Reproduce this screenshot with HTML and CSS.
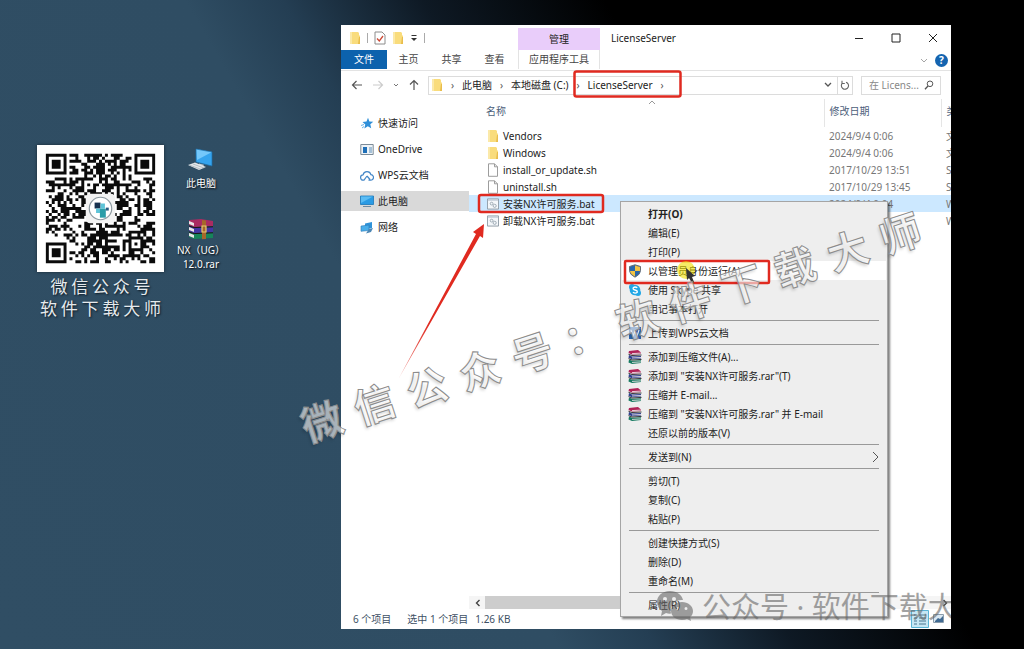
FILE: index.html
```html
<!DOCTYPE html>
<html lang="zh-CN">
<head>
    <meta charset="UTF-8">
    <title>LicenseServer</title>
    <link rel="stylesheet" href="styles.css">
</head>
<body>
    <svg class="sprite" aria-hidden="true">
        <symbol id="folder" viewBox="0 0 12 14">
            <path d="M1 1h8l1 1v2l1 1v8H1z" fill="#f9dc7c"/>
            <path d="M1 1h2v12H1z" fill="#fbe9a9"/>
            <path d="M10 6h1v7H9z" fill="#e9bd4c"/>
        </symbol>
        <symbol id="file" viewBox="0 0 12 14">
            <path d="M1.5.8h6l3 3v9.5h-9z" fill="#fff" stroke="#929292" stroke-width=".9"/>
            <path d="M7.5.8v3h3" fill="none" stroke="#929292" stroke-width=".9"/>
        </symbol>
        <symbol id="bat" viewBox="0 0 13 12">
            <path d="M.5.5h12v11H.5z" fill="#f4f7fa" stroke="#8c98a3"/>
            <path d="M1 1h11v1.5H1z" fill="#c3ced8"/>
            <circle cx="5" cy="5.600" r="1.500" fill="none" stroke="#9aa7b1"/>
            <circle cx="8.300" cy="8" r="1.700" fill="none" stroke="#9aa7b1"/>
        </symbol>
        <symbol id="rar" viewBox="0 0 14 14">
            <path d="M1 1l9-1 3 2.500V4L4 4.500.5 3z" fill="#b02257"/>
            <path d="M1 5l3 1.500 9-.5v2.500l-9 .7-3.500-1.500z" fill="#2f3f8e"/>
            <path d="M1 9.500l3 1.300 9-.5V13l-9 1-3.500-1.500z" fill="#157a60"/>
            <path d="M4 3.600l9-.5M4 8l9-.5M4 12.400l9-.5" stroke="#ece3e6" stroke-width=".9"/>
            <path d="M.5 4.300L4 5.500l9.500-.5M.5 8.600L4 10l9.500-.6" stroke="#222" stroke-width=".9" fill="none"/>
        </symbol>
        <symbol id="monitor" viewBox="0 0 14 13">
            <path d="M.5 1h13v8.500H.5z" fill="#2b9be4" stroke="#1b77b9" stroke-width=".8"/>
            <path d="M1 1.500h12L1 8z" fill="#5abcf4"/>
            <path d="M3 11.500h8" stroke="#6d8ba3"/>
        </symbol>
    </svg>

    <main class="desktop">
        <section class="promo">
            <svg class="qr" viewBox="0 0 43 43" role="img" aria-label="二维码">
                <rect width="43" height="43" fill="#fff"/>
                <path id="qr-modules" fill="#0b0b0b"/>
                <rect x="16.500" y="16.500" width="10" height="10" rx="1.500" fill="#f3f3f3"/>
                <circle cx="21.500" cy="21.500" r="3.800" fill="#fff" stroke="#8c99a0" stroke-width=".4"/>
                <path d="M19.500 19.500h2v2h-2z" fill="#17324f"/>
                <path d="M21.500 19.800h1.500v1.800h-1.500zM20 21.500h1.500v1.500H20z" fill="#5ec4d8"/>
                <path d="M21.300 21.600h2v3h-2z" fill="#2b9da8"/>
                <path d="M23.300 21.200h1v1h-1z" fill="#2c5d83"/>
            </svg>
            <p class="promo-text">微 信 公 众 号</p>
            <p class="promo-text">软 件 下 载 大 师</p>
        </section>

        <section class="shortcuts">
            <a class="shortcut" href="#">
                <svg width="28" height="26" viewBox="0 0 28 26">
                    <path d="M9 2l16 3v14L9 15z" fill="#35a4ee"/>
                    <path d="M9 2l16 3L10 13z" fill="#74c8fb"/>
                    <path d="M9 2l16 3v14L9 15z" fill="none" stroke="#1d6ea8" stroke-width=".7"/>
                    <path d="M12 16.500l5 1.300-1 2.200h-5z" fill="#b8c5cf"/>
                    <path d="M1 18l7-2.500 11 4.500-7 3z" fill="#e3e7ea"/>
                    <path d="M3 18.300l11 4M6 17l11 4" stroke="#93a0aa" stroke-width=".6"/>
                </svg>
                <span>此电脑</span>
            </a>
            <a class="shortcut" href="#">
                <svg width="28" height="22" viewBox="0 0 28 22">
                    <path d="M2 2l12-1 12 2v5l-19 1-5-2z" fill="#a92c62"/>
                    <path d="M2 8l5 2 19-1v5L7 15l-5-2z" fill="#4336a4"/>
                    <path d="M2 14l5 2 19-1v5L7 21l-5-2z" fill="#16855a"/>
                    <path d="M2 3l5 2v3L2 6zM2 9l5 2v3l-5-2zM2 15l5 2v3l-5-2z" fill="#e9e6e6"/>
                    <path d="M2 8l5 1.600L26 8.800M2 14l5 1.600 19-.8" fill="none" stroke="#191919"/>
                    <path d="M15 2l4 .5V21l-4 .3z" fill="#a5672b"/>
                    <path d="M15 8h4v6h-4z" fill="none" stroke="#eacb72" stroke-width="1.200"/>
                </svg>
                <span>NX（UG）<br>12.0.rar</span>
            </a>
        </section>

        <section class="window">
            <header class="titlebar">
                <div class="quick-access">
                    <svg width="12" height="14"><use href="#folder"/></svg>
                    <i class="divider"></i>
                    <svg width="12" height="14" viewBox="0 0 12 14">
                        <path d="M1 1h7l3 3v9H1z" fill="#fff" stroke="#8c8c8c"/>
                        <path d="M3 7.500l2.300 2.500L9 5" fill="none" stroke="#cc4a36" stroke-width="1.300"/>
                    </svg>
                    <svg width="12" height="14"><use href="#folder"/></svg>
                    <svg width="8" height="8" viewBox="0 0 8 8"><path d="M1.500 1.500h5" stroke="#333"/><path d="M1 4h6L4 7z" fill="#333"/></svg>
                    <i class="divider"></i>
                </div>
                <div class="tool-group">管理</div>
                <h1 class="window-title">LicenseServer</h1>
                <div class="window-buttons">
                    <button type="button" aria-label="最小化"><svg width="10" height="10" viewBox="0 0 10 10"><path d="M1 5.500h8"/></svg></button>
                    <button type="button" aria-label="最大化"><svg width="10" height="10" viewBox="0 0 10 10"><path d="M1 1h8v8H1z"/></svg></button>
                    <button type="button" aria-label="关闭"><svg width="10" height="10" viewBox="0 0 10 10"><path d="M1 1l8 8M9 1L1 9"/></svg></button>
                </div>
            </header>

            <nav class="ribbon">
                <a class="tab tab-file" href="#">文件</a>
                <a class="tab" href="#">主页</a>
                <a class="tab" href="#">共享</a>
                <a class="tab" href="#">查看</a>
                <a class="tab tab-tools" href="#">应用程序工具</a>
                <svg class="ribbon-toggle" width="8" height="6" viewBox="0 0 8 6"><path d="M1 1l3 3 3-3" fill="none" stroke="#a5a5a5"/></svg>
                <button class="help" type="button">?</button>
            </nav>

            <div class="location">
                <div class="history">
                    <svg width="12" height="12" viewBox="0 0 12 12"><path d="M11 6H2M5.500 2L1.500 6l4 4" fill="none" stroke="#555" stroke-width="1.200"/></svg>
                    <svg width="12" height="12" viewBox="0 0 12 12"><path d="M1 6h9M6.500 2l4 4-4 4" fill="none" stroke="#ccc" stroke-width="1.200"/></svg>
                    <svg width="6" height="6" viewBox="0 0 6 6"><path d="M1 2l2 2 2-2" fill="none" stroke="#777"/></svg>
                    <svg width="12" height="12" viewBox="0 0 12 12"><path d="M6 11V2M2 5.500l4-4 4 4" fill="none" stroke="#555" stroke-width="1.200"/></svg>
                </div>
                <div class="address">
                    <svg width="12" height="14"><use href="#folder"/></svg>
                    <span class="arrow">›</span>
                    <a href="#">此电脑</a>
                    <span class="arrow">›</span>
                    <a href="#">本地磁盘 (C:)</a>
                    <span class="arrow">›</span>
                    <a href="#">LicenseServer</a>
                    <span class="arrow">›</span>
                    <svg class="address-drop" width="8" height="6" viewBox="0 0 8 6"><path d="M1 1l3 3 3-3" fill="none" stroke="#555" stroke-width="1.300"/></svg>
                    <button class="refresh" type="button" aria-label="刷新"><svg width="10" height="11" viewBox="0 0 10 11"><path d="M6 2.200A3.600 3.600 0 1 1 2.500 3M2 .8v2.700h2.800" fill="none" stroke="#666" stroke-width="1.100"/></svg></button>
                </div>
                <label class="search">
                    <input type="text" placeholder="在 Licens..." aria-label="搜索">
                    <svg width="10" height="10" viewBox="0 0 10 10"><circle cx="6" cy="3.800" r="2.800" fill="none" stroke="#555"/><path d="M4 6L1 9.200" stroke="#555" stroke-width="1.300"/></svg>
                </label>
            </div>

            <div class="body">
                <nav class="sidebar">
                    <a href="#">
                        <svg width="14" height="13" viewBox="0 0 14 13"><path d="M8 .8l1.400 3.600 3.900.3-3 2.600.9 4-3.400-2.100-3.500 2.300 1-4L2.500 5l4-.4z" fill="#2f8fd8"/><path d="M1 8.500l3-1M2 11l2-1.500" stroke="#6cb2e6"/></svg>
                        快速访问
                    </a>
                    <a href="#">
                        <svg width="14" height="13" viewBox="0 0 14 13"><path d="M.8 1.500h12.400v10H.8z" fill="#eef3f7" stroke="#7c8b98"/><path d="M3 4h4v6H3z" fill="#1f6fb8"/><path d="M9 5h3M9 7h3M9 9h3" stroke="#5d8fb9"/></svg>
                        OneDrive
                    </a>
                    <a href="#">
                        <svg width="14" height="13" viewBox="0 0 14 13"><path d="M7 7l-3 4.200H3.500a2.700 2.700 0 0 1-.4-5.400 4 4 0 0 1 7.800-.2 2.800 2.800 0 0 1-.4 5.600H8.500M7 7l3 3.500" fill="none" stroke="#4487c7" stroke-width="1.200"/></svg>
                        WPS云文档
                    </a>
                    <a class="active" href="#">
                        <svg width="14" height="13"><use href="#monitor"/></svg>
                        此电脑
                    </a>
                    <a href="#">
                        <svg width="14" height="13" viewBox="0 0 14 13"><path d="M5 2.500L12 1v6l-7 1.500z" fill="#3093d9"/><path d="M1 5l8-1v5.500l-8 .8z" fill="#49aeea" stroke="#2a78b5" stroke-width=".6"/><path d="M9 8l4-1-2 4-5 1.500z" fill="#4c86b4"/></svg>
                        网络
                    </a>
                </nav>

                <div class="files">
                    <table>
                        <thead>
                            <tr><th class="col-name">名称</th><th class="col-date">修改日期</th><th>类型</th></tr>
                        </thead>
                        <tbody>
                            <tr><td><svg width="12" height="14"><use href="#folder"/></svg>Vendors</td><td>2024/9/4 0:06</td><td>文件夹</td></tr>
                            <tr><td><svg width="12" height="14"><use href="#folder"/></svg>Windows</td><td>2024/9/4 0:06</td><td>文件夹</td></tr>
                            <tr><td><svg width="12" height="14"><use href="#file"/></svg>install_or_update.sh</td><td>2017/10/29 13:51</td><td>SH</td></tr>
                            <tr><td><svg width="12" height="14"><use href="#file"/></svg>uninstall.sh</td><td>2017/10/29 13:45</td><td>SH</td></tr>
                            <tr class="selected"><td><svg width="12" height="12"><use href="#bat"/></svg>安装NX许可服务.bat</td><td>2024/9/4 0:04</td><td>Windows</td></tr>
                            <tr><td><svg width="12" height="12"><use href="#bat"/></svg>卸载NX许可服务.bat</td><td>2024/9/4</td><td>Windows</td></tr>
                        </tbody>
                    </table>
                    <svg class="sort" width="8" height="5" viewBox="0 0 8 5"><path d="M1 4l3-3 3 3" fill="none" stroke="#999"/></svg>
                    <div class="scrollbar">
                        <svg width="8" height="8" viewBox="0 0 8 8"><path d="M5.500 1l-3 3 3 3" fill="none" stroke="#444" stroke-width="1.400"/></svg>
                        <div class="thumb"></div>
                        <svg width="8" height="8" viewBox="0 0 8 8"><path d="M2.500 1l3 3-3 3" fill="none" stroke="#444" stroke-width="1.400"/></svg>
                    </div>
                </div>
            </div>

            <footer class="statusbar">
                <span>6 个项目</span>
                <span class="picked">选中 1 个项目</span>
                <span>1.26 KB</span>
                <svg class="views" width="34" height="18" viewBox="0 0 34 18">
                    <path d="M.5.500h17v17H.5z" fill="#c6e7f4" stroke="#5bb5d6"/>
                    <path d="M3 5h3M8 5h7M3 8h3M8 8h7M3 11h3M8 11h7M3 14h3M8 14h7" stroke="#4a7690"/>
                    <path d="M22.500 4.500h10v8h-10z" fill="#dbe8f1" stroke="#8b9dac"/><path d="M24 11l3-3 2 1 3-3v6h-8z" fill="#406a92"/>
                </svg>
            </footer>

            <div class="menu" role="menu">
                <button type="button" class="default">打开(O)</button>
                <button type="button">编辑(E)</button>
                <button type="button">打印(P)</button>
                <button type="button" class="with-icon hover">
                    <svg width="14" height="14" viewBox="0 0 14 14"><path d="M7 .8l5.500 1.700v4q0 4-5.500 6.700-5.500-2.700-5.500-6.700v-4z" fill="#2867ac" stroke="#6b6f72"/><path d="M7 1.500l5 1.500v4H7zM7 7v5.500Q2.500 10 2 7z" fill="#f3c443"/></svg>
                    以管理员身份运行(A)
                </button>
                <button type="button" class="with-icon">
                    <svg width="14" height="14" viewBox="0 0 14 14"><circle cx="7" cy="7" r="5.300" fill="#21a7e6"/><circle cx="4" cy="4" r="3" fill="#21a7e6"/><circle cx="10" cy="10" r="3" fill="#21a7e6"/><path d="M9.300 4.800Q7 3.300 5.300 4.700 4.500 6.500 7 7t2.300 2.200Q7.500 11 4.900 9.300" fill="none" stroke="#fff" stroke-width="1.300"/></svg>
                    使用 Skype 共享
                </button>
                <button type="button">用记事本打开</button>
                <hr>
                <button type="button" class="with-icon">
                    <svg width="14" height="14" viewBox="0 0 14 14"><path d="M1 1h12v12H1z" fill="#2e68b3"/><path d="M3 4l2 6 2-5 2 5 2-6" fill="none" stroke="#e9f1fb" stroke-width="1.200"/></svg>
                    上传到WPS云文档
                </button>
                <hr>
                <button type="button" class="with-icon"><svg width="14" height="14"><use href="#rar"/></svg>添加到压缩文件(A)...</button>
                <button type="button" class="with-icon"><svg width="14" height="14"><use href="#rar"/></svg>添加到 "安装NX许可服务.rar"(T)</button>
                <button type="button" class="with-icon"><svg width="14" height="14"><use href="#rar"/></svg>压缩并 E-mail...</button>
                <button type="button" class="with-icon"><svg width="14" height="14"><use href="#rar"/></svg>压缩到 "安装NX许可服务.rar" 并 E-mail</button>
                <button type="button">还原以前的版本(V)</button>
                <hr>
                <button type="button" class="submenu">发送到(N)<svg width="7" height="12" viewBox="0 0 7 12"><path d="M1 1l5 5-5 5" fill="none" stroke="#555"/></svg></button>
                <hr>
                <button type="button">剪切(T)</button>
                <button type="button">复制(C)</button>
                <button type="button">粘贴(P)</button>
                <hr>
                <button type="button">创建快捷方式(S)</button>
                <button type="button">删除(D)</button>
                <button type="button">重命名(M)</button>
                <hr>
                <button type="button">属性(R)</button>
            </div>

            <div class="account">
                <svg width="38" height="34" viewBox="0 0 38 34">
                    <path fill-rule="evenodd" d="M14 1C6 1 1 6 1 12c0 4 2 7 5 9l-1 5 5-3q3 1 5 .5C13 16 19 9 27 10 26 5 21 1 14 1zM9 7a2 2 0 1 1 0 4 2 2 0 0 1 0-4zm9 0a2 2 0 1 1 0 4 2 2 0 0 1 0-4z"/>
                    <path fill-rule="evenodd" d="M26 12c-6 0-11 4-11 9s5 9 11 9q3 0 5-1l4 2-1-4c2-1 3-4 3-6 0-5-5-9-11-9zm-4 5a1.500 1.500 0 1 1 0 3 1.500 1.500 0 0 1 0-3zm8 0a1.500 1.500 0 1 1 0 3 1.500 1.500 0 0 1 0-3z"/>
                </svg>
                <span>公众号 · 软件下载大师</span>
            </div>
        </section>

        <svg class="marks" width="1024" height="649" viewBox="0 0 1024 649">
            <defs>
                <linearGradient id="fade" gradientUnits="userSpaceOnUse" x1="400" y1="378" x2="430" y2="324">
                    <stop offset="0" stop-color="#e02a20" stop-opacity=".5"/>
                    <stop offset="1" stop-color="#e02a20"/>
                </linearGradient>
            </defs>
            <g fill="none" stroke="#e02a20" stroke-width="2.500">
                <rect x="574.500" y="71.500" width="106" height="25" rx="2"/>
                <rect x="479" y="195" width="124" height="17" rx="2"/>
                <rect x="625" y="261" width="144" height="22" rx="1"/>
            </g>
            <path d="M399 378L476 234l-3-2 11-8-1 14-3-2z" fill="url(#fade)"/>
            <circle cx="686" cy="270" r="9" fill="#f0e000" opacity=".6"/>
            <path d="M686 268l1 12 2-2 3 5 2-1-2-5 3-1z" fill="#333"/>
        </svg>
        <p class="watermark">微 信 公 众 号 ： 软 件 下 载 大 师</p>
    </main>
    <script src="qr.js"></script>
</body>
</html>
```

FILE: styles.css
```css
* {
    box-sizing: border-box;
}

body {
    margin: 0;
    height: 100vh;
    overflow: hidden;
    font-family: "Noto Sans", "Noto Sans CJK SC", sans-serif;
    font-size: 10px;
    line-height: 14px;
    color: #222;
}

a {
    color: inherit;
    text-decoration: none;
}

button,
input {
    font: inherit;
    color: inherit;
    border: none;
    padding: 0;
    background: none;
}

svg {
    flex: none;
}

.sprite {
    position: absolute;
    width: 0;
    height: 0;
}

.desktop {
    position: relative;
    height: 100vh;
    overflow: hidden;
    background: linear-gradient(60deg, #304e64 0%, #2f4d63 40%, #243e53 47%, #0e1924 57%, #000 70%);
}

/* desktop items */
.promo {
    position: absolute;
    left: 37px;
    top: 145px;
    width: 127px;
}

.qr {
    display: block;
    width: 100%;
    margin-bottom: 3px;
    box-shadow: 0 0 3px rgba(0, 0, 0, 0.5);
}

.promo-text {
    margin: 0 -4px;
    font-family: "Noto Sans CJK SC", sans-serif;
    font-size: 17px;
    line-height: 22px;
    text-align: center;
    white-space: nowrap;
    color: #e6eaed;
    text-shadow: 1px 1px 2px #0c1822;
}

.shortcuts {
    position: absolute;
    left: 171px;
    top: 147px;
    width: 60px;
    display: flex;
    flex-direction: column;
    gap: 28px;
}

.shortcut {
    display: flex;
    flex-direction: column;
    align-items: center;
    gap: 3px;
    color: #fff;
    text-align: center;
    text-shadow: 1px 1px 2px #000;
}

/* explorer window */
.window {
    position: absolute;
    left: 341px;
    right: 73px;
    top: 25px;
    bottom: 20px;
    display: flex;
    flex-direction: column;
    overflow: hidden;
    background: #fff;
}

.titlebar {
    display: flex;
    height: 25px;
    align-items: center;
}

.quick-access {
    display: flex;
    align-items: center;
    gap: 6px;
    width: 177px;
    padding-left: 8px;
}

.divider {
    width: 1px;
    height: 10px;
    background: #aaa;
}

.tool-group {
    align-self: flex-end;
    width: 82px;
    height: 22px;
    line-height: 22px;
    text-align: center;
    background: #e9cdfa;
}

.window-title {
    flex: 1;
    margin: 0;
    padding-left: 11px;
    font-size: 10px;
    font-weight: 400;
}

.window-buttons {
    display: flex;
}

.window-buttons button {
    display: flex;
    justify-content: center;
    width: 37px;
}

.window-buttons path {
    fill: none;
    stroke: #222;
}

.ribbon {
    display: flex;
    height: 21px;
    padding-right: 3px;
    align-items: flex-start;
    border-bottom: 1px solid #e3e3e3;
}

.tab {
    width: 43px;
    line-height: 19px;
    text-align: center;
    color: #444;
}

.tab-file {
    width: 46px;
    color: #fff;
    background: #0c62ad;
}

.tab-tools {
    width: 82px;
    margin-left: 2px;
    border-left: 1px solid #e3e3e3;
    border-right: 1px solid #e3e3e3;
}

.ribbon-toggle {
    margin: 8px 7px 0 auto;
}

.help {
    width: 13px;
    height: 13px;
    margin-top: 4px;
    border-radius: 50%;
    line-height: 13px;
    font-weight: 700;
    color: #fff;
    background: #1464b0;
}

.location {
    display: flex;
    height: 28px;
    padding: 0 10px;
    align-items: center;
    gap: 8px;
}

.history {
    display: flex;
    align-items: center;
    gap: 9px;
    width: 69px;
}

.address {
    display: flex;
    flex: 1;
    align-items: center;
    height: 19px;
    padding-left: 2px;
    border: 1px solid #dcdcdc;
    white-space: nowrap;
}

.arrow {
    width: 19px;
    text-align: center;
    color: #555;
}

.address-drop {
    margin: 0 5px 0 auto;
}

.refresh {
    display: flex;
    align-items: center;
    justify-content: center;
    width: 15px;
    height: 17px;
    border-left: 1px solid #dcdcdc;
}

.search {
    display: flex;
    align-items: center;
    width: 80px;
    height: 19px;
    padding: 0 6px 0 7px;
    border: 1px solid #dcdcdc;
}

.search input {
    flex: 1;
    min-width: 0;
    outline: none;
}

.search input::placeholder {
    color: #888;
    opacity: 1;
}

.body {
    display: flex;
    flex: 1;
    min-height: 0;
}

.sidebar {
    display: flex;
    flex-direction: column;
    gap: 6px;
    width: 128px;
    padding-top: 14px;
}

.sidebar a {
    display: flex;
    align-items: center;
    gap: 4px;
    height: 20px;
    padding-left: 19px;
}

.sidebar .active {
    background: #d9d9d9;
}

.files {
    position: relative;
    display: flex;
    flex: 1;
    flex-direction: column;
    min-width: 0;
    overflow: hidden;
}

.files table {
    width: 100%;
    table-layout: fixed;
    border-collapse: collapse;
    white-space: nowrap;
}

.files th {
    height: 28px;
    padding: 0 0 4px 5px;
    border-left: 1px solid #e5e5e5;
    text-align: left;
    font-weight: 400;
    color: #4c607a;
}

.files th.col-name {
    width: 355px;
    padding-left: 17px;
    border-left: none;
}

.files .col-date {
    width: 117px;
}

.files td {
    height: 17px;
    padding: 0 0 0 5px;
    overflow: hidden;
    color: #777;
}

.files td:first-child {
    display: flex;
    align-items: center;
    gap: 4px;
    padding-left: 18px;
    color: #222;
}

.files .selected {
    background: #cce8ff;
}

.sort {
    position: absolute;
    left: 179px;
    top: 1px;
}

.scrollbar {
    display: flex;
    align-items: center;
    height: 13px;
    margin-top: auto;
    padding: 0 2px 0 5px;
    background: #f5f5f5;
}

.thumb {
    flex: 1;
    height: 13px;
    margin: 0 140px 0 3px;
    background: #cdcdcd;
}

.statusbar {
    display: flex;
    align-items: center;
    height: 20px;
    padding: 0 6px 0 12px;
    gap: 7px;
    color: #3d5064;
}

.picked {
    margin-left: 9px;
}

.views {
    margin-left: auto;
}

/* context menu */
.menu {
    position: absolute;
    left: 279px;
    top: 176px;
    width: 268px;
    padding: 2px 1px;
    border: 1px solid #a5a5a5;
    background: #eee;
    box-shadow: 2px 2px 2px rgba(0, 0, 0, 0.5);
}

.menu button {
    display: flex;
    align-items: center;
    gap: 6px;
    width: 100%;
    height: 19px;
    padding-left: 26px;
    white-space: nowrap;
}

.menu .with-icon {
    padding-left: 6px;
}

.menu .default {
    font-weight: 700;
}

.menu .hover {
    background: #fff;
}

.menu .submenu {
    justify-content: space-between;
    padding-right: 7px;
}

.menu hr {
    height: 1px;
    margin: 2px 7px;
    border: none;
    background: #999;
}

.account {
    position: absolute;
    left: 315px;
    top: 565px;
    display: flex;
    align-items: center;
    gap: 8px;
    font-size: 29px;
    line-height: 34px;
    white-space: nowrap;
    color: #666;
    fill: #666;
    opacity: 0.6;
    pointer-events: none;
}

.marks {
    position: absolute;
    left: 0;
    top: 0;
    pointer-events: none;
}

.watermark {
    position: absolute;
    left: 287px;
    top: 299px;
    margin: 0;
    font-family: "DejaVu Sans", "Noto Sans CJK SC", sans-serif;
    font-size: 41px;
    font-weight: 700;
    line-height: 60px;
    white-space: nowrap;
    color: rgba(255, 255, 255, 0.6);
    -webkit-text-stroke: 1px #8c8c8c;
    text-shadow: -2px 2px 3px rgba(0, 0, 0, 0.15);
    transform: rotate(-18deg);
    pointer-events: none;
}
```

FILE: qr.js
```javascript
const size = 37;
const quiet = 3;
let seed = 20240904;

function random() {
    seed = (seed * 1103515245 + 12345) % 2147483648;
    return seed / 2147483648;
}

// ring pattern: radius 3 for finders, 2 for the alignment mark
function ring(x, y, cx, cy, radius) {
    const d = Math.max(Math.abs(x - cx), Math.abs(y - cy));
    if (d > radius + (radius === 3 ? 1 : 0)) return null;
    if (radius === 3) return d === 3 || d <= 1;
    return d !== 1;
}

let path = '';
for (let y = 0; y < size; y++) {
    for (let x = 0; x < size; x++) {
        const noise = random() < (x > 9 && x < 25 && y < 14 ? 0.6 : 0.5);
        const dark = ring(x, y, 3, 3, 3) ?? ring(x, y, 33, 3, 3) ?? ring(x, y, 3, 33, 3) ?? ring(x, y, 30, 30, 2) ?? noise;
        if (dark) path += `M${x + quiet} ${y + quiet}h1v1h-1z`;
    }
}
document.getElementById('qr-modules').setAttribute('d', path);
```
